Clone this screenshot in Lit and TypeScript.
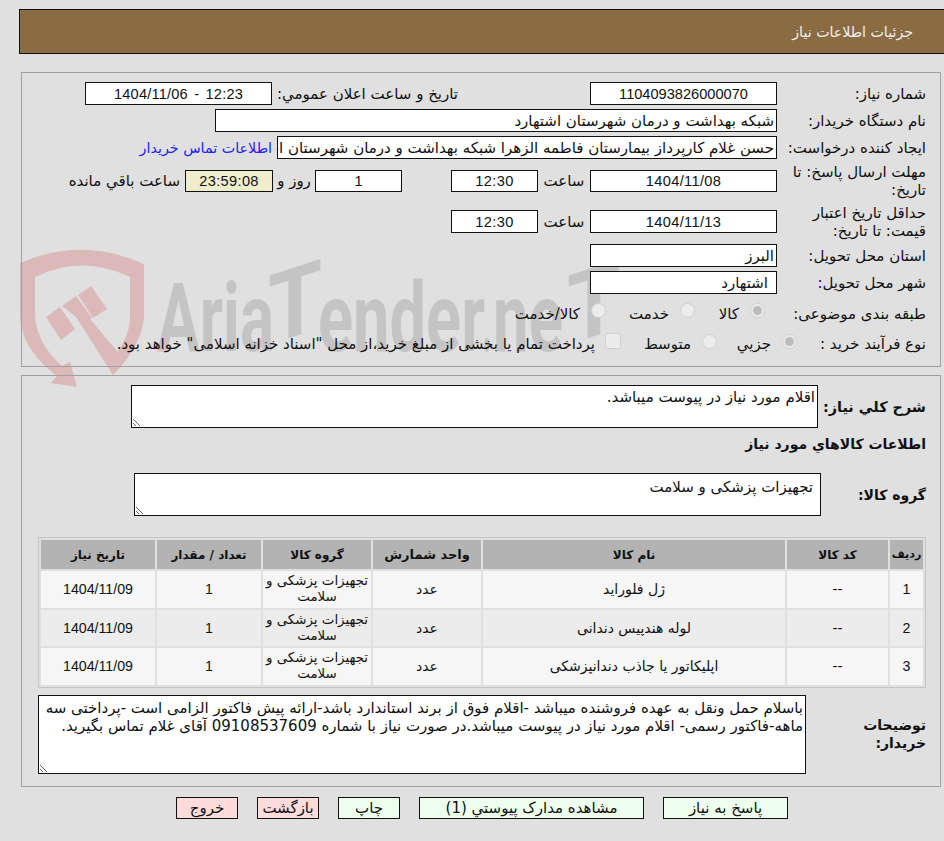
import { LitElement, html, css, svg } from "lit";
import { customElement } from "lit/decorators.js";

const rows = [
  ["1", "ژل فلوراید", "odd"],
  ["2", "لوله هندپیس دندانی", "even"],
  ["3", "اپلیکاتور یا جاذب دندانپزشکی", "odd"],
];

@customElement("app-root")
export class AppRoot extends LitElement {
  static styles = css`
    :host {
      display: block;
      position: relative;
      width: 944px;
      height: 841px;
      overflow: hidden;
      background: #e0e0e0;
      direction: rtl;
      font-family: "DejaVu Sans", sans-serif;
      font-size: 15px;
      color: #111;
    }
    .wm { position: absolute; left: 0; top: 0; z-index: 0; direction: ltr; }
    .wm text { font-family: Roboto, sans-serif; font-weight: 700; fill: #c4c4c4; direction: ltr; }
    .page { position: relative; z-index: 1; display: flex; flex-direction: column; }
    .header {
      box-sizing: border-box;
      margin: 9px 0 0 0;
      margin-left: 19px;
      height: 45px;
      border: 1px solid #111;
      border-right: none;
      background: #8b6b41;
      color: #f2f2f2;
      padding-right: 31px;
      display: flex;
      align-items: center;
      font-size: 14.2px;
    }
    .panel {
      box-sizing: border-box;
      width: 920px;
      margin-right: 3px;
      border: 1px solid #a0a0a0;
      padding-right: 14px;
    }
    .p1 { margin-top: 18px; height: 295px; padding-top: 9px; display: grid;
      grid-template-rows: 23px 23px 23px 36px 37px 23px 23px 31px 22px; row-gap: 4px; }
    .p2 { margin-top: 8px; height: 412px; padding-top: 9px; display: flex; flex-direction: column; }
    .row { display: flex; align-items: center; white-space: nowrap; }
    .lbl { flex: none; width: 149px; box-sizing: border-box; padding-left: 4px; white-space: normal; line-height: 18px; }
    .box {
      flex: none; box-sizing: border-box; height: 23px; border: 1px solid #111; background: #fff;
      display: flex; align-items: center; justify-content: center; overflow: hidden; white-space: nowrap;
    }
    .h22 { height: 22px; }
    .start { justify-content: flex-start; padding: 0 2px; }
    .num { font-family: "Liberation Sans", sans-serif; font-size: 14.6px; }
    .date { letter-spacing: 0.35px; }
    .wide { word-spacing: 2px; letter-spacing: 0.2px; }
    .w187 { width: 187px; } .w87 { width: 87px; } .w88 { width: 88px; }
    .w562 { width: 562px; } .w500 { width: 500px; }
    .yellow { background: #eeeecc; }
    .m132 { margin-right: 132px; }
    .l185 { width: 186px; flex: none; }
    .link { color: #2222ee; margin-right: 5px; font-size: 14.3px; }
    .s52 { width: 52px; flex: none; text-align: center; }
    .s49 { width: 49px; flex: none; }
    .s42 { width: 42px; flex: none; text-align: center; }
    .m5 { margin-right: 5px; }
    .ind { padding-right: 8px; }
    .lbl128 { width: 129px; }
    .opt { flex: none; display: flex; align-items: center; gap: 11px; }
    .o70 { width: 70px; } .o89 { width: 89px; } .o80 { width: 80px; } .o96 { width: 96px; }
    .m12 { margin-right: 12px; }
    .radio {
      flex: none; box-sizing: border-box; width: 15px; height: 15px; border-radius: 50%;
      background: #ececec; border: 1px solid #cfcfcf; margin-bottom: 6px;
      display: flex; align-items: center; justify-content: center;
    }
    .radio.on::after { content: ""; width: 9px; height: 9px; border-radius: 50%; background: #bdbdbd; }
    .check { flex: none; box-sizing: border-box; width: 16px; height: 16px; border-radius: 2px;
      background: #ececec; border: 1px solid #cfcfcf; margin-bottom: 6px; }
    .pay { margin-right: 10px; }
    textarea {
      flex: none; box-sizing: border-box; display: block; border: 1px solid #111; border-radius: 0; background: #fff;
      font: 15px "DejaVu Sans", sans-serif; color: #111; padding: 2px; margin: 0; outline: none; resize: both;
      overflow: hidden; direction: rtl;
    }
    .t1 { width: 687px; height: 43px; }
    .t2 { width: 687px; height: 43px; padding: 4px 7px; }
    .t3 { width: 768px; height: 79px; padding: 3px 2px; line-height: 18.5px; }
    .b { font-weight: 700; font-size: 14px; }
    .b144 { font-size: 14.4px; }
    .l107 { width: 108px; flex: none; }
    .l104 { width: 105px; flex: none; }
    .l119 { width: 120px; box-sizing: border-box; padding-left: 24px; flex: none; line-height: 18px; white-space: normal; }
    .h2 { height: 18px; margin-top: 7px; line-height: 18px; }
    .r2 { margin-top: 20px; }
    table {
      margin-top: 21px; width: 888px; box-sizing: border-box;
      border: 1px solid #c4c4c4; border-spacing: 2px; border-collapse: separate; table-layout: fixed;
      font-size: 14px;
    }
    th { background: #b3b3b3; height: 29px; padding: 0; font-size: 12px; font-weight: 700; white-space: nowrap; }
    th.xs { font-size: 11.2px; }
    th.lg { font-size: 13px; }
    td { text-align: center; padding: 0; height: 36.5px; line-height: 16px; }
    td.grp { font-size: 13.4px; }
    td.tnum { font-family: "Liberation Sans", sans-serif; font-size: 14.2px; }
    tr.odd td { background: #f6f6f6; }
    tr.even td { background: #ececec; }
    .r3 { margin-top: 7px; }
    .btns { display: flex; padding-right: 156px; gap: 19px; margin-top: 10px; }
    .btn { box-sizing: border-box; height: 22px; border: 1px solid #111; display: flex; align-items: center;
      justify-content: center; font-size: 15px; background: #eeffee; white-space: nowrap; }
    .red { background: #ffdcdc; }
    .b125 { width: 125px; } .b225 { width: 225px; } .b62 { width: 62px; }
  `;

  private watermark() {
    return html`<svg class="wm" width="944" height="841" viewBox="0 0 944 841" aria-hidden="true">
      ${svg`
      <g fill="#dbb9b9">
        <path d="M20 263 Q82 236 144 264 L144 317 Q142 345 113 375 L107 365 Q130 340 130 317 L130 277 Q82 254 35 277 L35 317 Q38 345 62 366 L70 362 L77 387 L51 383 L57 376 Q22 350 20 317 Z"/>
        <path d="M46 317 L60 307 L75 329 L61 340 Z"/>
        <path d="M62 306 L76 296 L92 318 L90 319 L122 357 L113 375 L76 317 Z"/>
        <path d="M78 295 L91 286 L107 309 L93 318 Z"/>
      </g>
      <text x="157" y="351" font-size="97" textLength="117" lengthAdjust="spacingAndGlyphs">Aria</text>
      <g transform="translate(268 351) skewY(-18)"><text x="0" y="-6" font-size="97" textLength="54" lengthAdjust="spacingAndGlyphs">T</text></g>
      <text x="318" y="351" font-size="97" textLength="167" lengthAdjust="spacingAndGlyphs">ender</text>
      <text x="482" y="351" font-size="97" textLength="10" lengthAdjust="spacingAndGlyphs">.</text>
      <text x="493" y="351" font-size="97" textLength="70" lengthAdjust="spacingAndGlyphs">ne</text>
      <g transform="translate(567 351) skewY(-18)"><text x="0" y="-6" font-size="97" textLength="54" lengthAdjust="spacingAndGlyphs">T</text></g>
      `}
    </svg>`;
  }

  render() {
    return html`
      ${this.watermark()}
      <div class="page">
        <div class="header">جزئیات اطلاعات نیاز</div>
        <div class="panel p1">
          <div class="row">
            <div class="lbl">شماره نیاز:</div>
            <div class="box w187 num">1104093826000070</div>
            <div class="m132 l185">تاریخ و ساعت اعلان عمومي:</div>
            <div class="box w187 num wide">12:23 - 1404/11/06</div>
          </div>
          <div class="row">
            <div class="lbl">نام دستگاه خریدار:</div>
            <div class="box w562 start">شبکه بهداشت و درمان شهرستان اشتهارد</div>
          </div>
          <div class="row">
            <div class="lbl">ایجاد کننده درخواست:</div>
            <div class="box w500 start">حسن غلام کارپرداز بیمارستان فاطمه الزهرا شبکه بهداشت و درمان شهرستان اشتهارد</div>
            <div class="link">اطلاعات تماس خریدار</div>
          </div>
          <div class="row">
            <div class="lbl">مهلت ارسال پاسخ: تا تاریخ:</div>
            <div class="box h22 w187 num date">1404/11/08</div>
            <div class="s52">ساعت</div>
            <div class="box h22 w87 num date">12:30</div>
            <div class="s49"></div>
            <div class="box h22 w87 num">1</div>
            <div class="s42">روز و</div>
            <div class="box h22 w88 num date yellow">23:59:08</div>
            <div class="m5">ساعت باقي مانده</div>
          </div>
          <div class="row">
            <div class="lbl">حداقل تاریخ اعتبار قیمت: تا تاریخ:</div>
            <div class="box w187 num date">1404/11/13</div>
            <div class="s52">ساعت</div>
            <div class="box w87 num date">12:30</div>
          </div>
          <div class="row">
            <div class="lbl">استان محل تحویل:</div>
            <div class="box w187 start">البرز</div>
          </div>
          <div class="row">
            <div class="lbl">شهر محل تحویل:</div>
            <div class="box w187 start ind">اشتهارد</div>
          </div>
          <div class="row">
            <div class="lbl">طبقه بندی موضوعی:</div>
            <div class="opt o70 m12"><span class="radio on"></span><span>کالا</span></div>
            <div class="opt o89"><span class="radio"></span><span>خدمت</span></div>
            <div class="opt"><span class="radio"></span><span>کالا/خدمت</span></div>
          </div>
          <div class="row">
            <div class="lbl lbl128">نوع فرآیند خرید :</div>
            <div class="opt o80"><span class="radio on"></span><span>جزیي</span></div>
            <div class="opt o96"><span class="radio"></span><span>متوسط</span></div>
            <span class="check"></span>
            <div class="pay">پرداخت تمام یا بخشی از مبلغ خرید،از محل "اسناد خزانه اسلامی" خواهد بود.</div>
          </div>
        </div>
        <div class="panel p2">
          <div class="row">
            <div class="l107 b b144">شرح كلي نياز:</div>
            <textarea class="t1" readonly>اقلام مورد نیاز در پیوست میباشد.</textarea>
          </div>
          <div class="h2 b">اطلاعات كالاهاي مورد نياز</div>
          <div class="row r2">
            <div class="l104 b">گروه کالا:</div>
            <textarea class="t2" readonly>تجهیزات پزشکی و سلامت</textarea>
          </div>
          <table>
            <colgroup>
              <col style="width:33px" /><col style="width:101px" /><col style="width:302px" /><col style="width:108px" />
              <col style="width:108px" /><col style="width:104px" /><col />
            </colgroup>
            <thead>
              <tr>
                <th class="xs">ردیف</th><th>کد کالا</th><th>نام کالا</th><th class="lg">واحد شمارش</th>
                <th>گروه کالا</th><th>تعداد / مقدار</th><th>تاریخ نیاز</th>
              </tr>
            </thead>
            <tbody>
              ${rows.map(
                ([n, name, cls]) => html`<tr class=${cls}>
                  <td class="tnum">${n}</td><td>--</td><td>${name}</td><td>عدد</td>
                  <td class="grp">تجهیزات پزشکی و سلامت</td><td class="tnum">1</td><td class="tnum">1404/11/09</td>
                </tr>`
              )}
            </tbody>
          </table>
          <div class="row r3">
            <div class="l119 b">توضیحات خریدار:</div>
            <textarea class="t3" readonly>باسلام حمل ونقل به عهده فروشنده میباشد -اقلام فوق از برند استاندارد باشد-ارائه پیش فاکتور الزامی است -پرداختی سه ماهه-فاکتور رسمی- اقلام مورد نیاز در پیوست میباشد.در صورت نیاز با شماره 09108537609 آقای غلام تماس بگیرید.</textarea>
          </div>
        </div>
        <div class="btns">
          <div class="btn b125">پاسخ به نیاز</div>
          <div class="btn b225">مشاهده مدارک پیوستي (1)</div>
          <div class="btn b62">چاپ</div>
          <div class="btn red b62">بازگشت</div>
          <div class="btn red b62">خروج</div>
        </div>
      </div>
    `;
  }
}
